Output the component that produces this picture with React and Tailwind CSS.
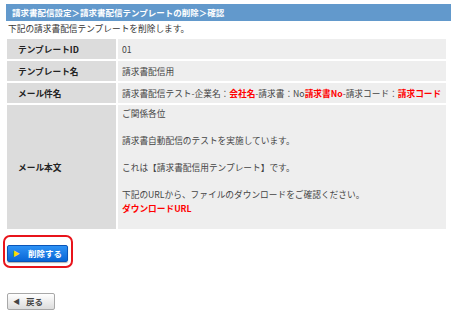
const labelCls =
  'bg-[#dcdcdc] font-bold text-[#222] pl-[11px] flex items-center';
const valueCls = 'bg-[#eeeeee] text-[#444] pl-[4px] flex items-center';

function Red({ children }) {
  return <span className="font-bold text-[#ff0000]">{children}</span>;
}

function App() {
  const rows = [
    { label: 'テンプレートID', value: '01' },
    { label: 'テンプレート名', value: '請求書配信用' },
    {
      label: 'メール件名',
      value: (
        <>
          請求書配信テスト-企業名：<Red>会社名</Red>-請求書：No
          <Red>請求書No</Red>-請求コード：<Red>請求コード</Red>
        </>
      ),
    },
  ];

  return (
    <div className="w-[453px] h-[317px] bg-white font-['Noto_Sans_CJK_JP','Noto_Sans',sans-serif] text-[8.7px] leading-[13.4px] text-[#333]">
      <div className="pt-[4px] pl-[6px] pr-[2px]">
        <div className="h-[17px] bg-[#6299cc] text-white text-[8.5px] font-bold pl-[6px] flex items-center">
          請求書配信設定＞請求書配信テンプレートの削除＞確認
        </div>
      </div>
      <p className="pl-[8px] pt-[1px]">下記の請求書配信テンプレートを削除します。</p>

      <div className="mt-[4px] ml-[7px] w-[439px] grid grid-cols-[109px_1fr] gap-[2px]">
        {rows.map((r) => (
          <div key={r.label} className="contents">
            <div className={`${labelCls} h-[20px]`}>{r.label}</div>
            <div className={`${valueCls} h-[20px]`}>{r.value}</div>
          </div>
        ))}
        <div className={`${labelCls} h-[124px]`}>メール本文</div>
        <div className="bg-[#eeeeee] text-[#444] pl-[4px] pt-[2px] h-[124px]">
          <p>ご関係各位</p>
          <p>&nbsp;</p>
          <p>請求書自動配信のテストを実施しています。</p>
          <p>&nbsp;</p>
          <p>これは【請求書配信用テンプレート】です。</p>
          <p>&nbsp;</p>
          <p>下記のURLから、ファイルのダウンロードをご確認ください。</p>
          <p className="mt-[1px]">
            <Red>ダウンロードURL</Red>
          </p>
        </div>
      </div>

      <div className="mt-[6px] ml-[3px] w-[70px] h-[33px] border-2 border-[#e8141b] rounded-[7px] flex items-center pl-[2px] pt-[3px]">
        <button className="w-[61px] h-[17px] rounded-[2px] border border-[#0a55b8] bg-gradient-to-b from-[#2d92f5] to-[#0866d6] text-white text-[8.5px] font-bold flex items-center pl-[5px] gap-[8px] shadow-[0_1px_1px_rgba(0,0,0,0.3)]">
          <span className="text-[#ffdc00] text-[7px]">▶</span>
          <span>削除する</span>
        </button>
      </div>

      <button className="mt-[25px] ml-[7px] w-[48px] h-[17px] rounded-[2px] border border-[#a8a8a8] bg-gradient-to-b from-white to-[#dcdcdc] text-[#444] text-[8.5px] font-bold flex items-center pl-[5px] gap-[6px]">
        <span className="text-[#444] text-[7px]">◀</span>
        <span>戻る</span>
      </button>
    </div>
  );
}

export default App;
